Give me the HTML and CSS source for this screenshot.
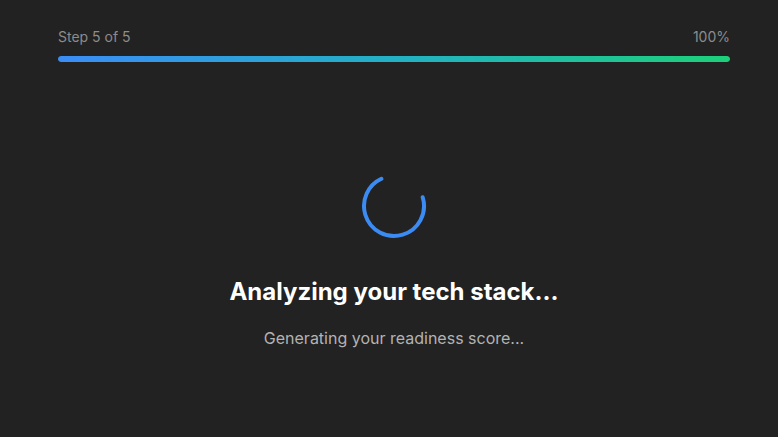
FILE: index.html
```html
<!DOCTYPE html>
<html lang="en">
<head>
<meta charset="utf-8">
<title>Analyzing</title>
<link rel="stylesheet" href="styles.css">
</head>
<body>
<div class="page">
  <header class="progress">
    <div class="progress-labels">
      <span>Step 5 of 5</span>
      <span>100%</span>
    </div>
    <div class="track"><div class="fill" style="width:100%"></div></div>
  </header>
  <main class="loading">
    <svg class="spinner" width="68" height="68" viewBox="0 0 68 68" aria-hidden="true">
      <circle cx="34" cy="34" r="30" fill="none" stroke="#3b8bf2" stroke-width="4" stroke-linecap="round" stroke-dasharray="137 200" transform="rotate(-17 34 34)"/>
    </svg>
    <h1 class="title">Analyzing your tech stack...</h1>
    <p class="subtitle">Generating your readiness score...</p>
  </main>
</div>
</body>
</html>
```
FILE: styles.css
```css
* { box-sizing: border-box; }
html, body {
  margin: 0;
  padding: 0;
  background: #222222;
  font-family: Inter, "Noto Sans", "Liberation Sans", sans-serif;
  color: #ffffff;
}
.page {
  width: 778px;
  height: 437px;
  padding: 27px 48px 0 58px;
}
.progress-labels {
  display: flex;
  justify-content: space-between;
  font-size: 14px;
  line-height: 20px;
  color: #8c8c8c;
}
.track {
  margin-top: 9px;
  height: 6px;
  border-radius: 3px;
  background: #3a3a3a;
  overflow: hidden;
}
.fill {
  height: 100%;
  border-radius: 3px;
  background: linear-gradient(90deg, #3b8df6 0%, #23b0c4 50%, #1dd07a 100%);
}
.loading {
  display: flex;
  flex-direction: column;
  align-items: center;
  padding-top: 110px;
}
.spinner {
  display: block;
}
.title {
  margin: 36px 0 0;
  font-size: 24px;
  line-height: 32px;
  font-weight: 700;
  color: #ffffff;
}
.subtitle {
  margin: 18px 0 0;
  font-size: 16px;
  line-height: 24px;
  color: #b3b3b3;
}
```
